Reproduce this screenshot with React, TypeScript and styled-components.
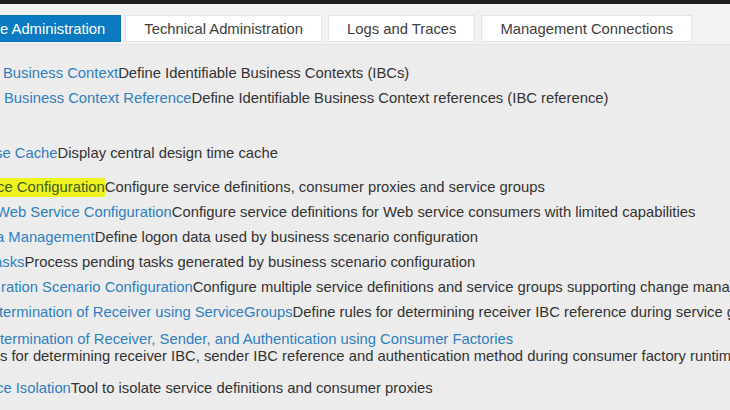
import React from "react";
import styled, { createGlobalStyle } from "styled-components";

const Global = createGlobalStyle`
  html, body { margin: 0; padding: 0; }
  body {
    background: #ededed;
    font-family: "Liberation Sans", Arial, sans-serif;
    width: 730px;
    height: 410px;
    overflow: hidden;
  }
`;

const Page = styled.div`
  width: 730px;
  height: 410px;
  overflow: hidden;
  display: flex;
  flex-direction: column;
  background: #ececec;
`;

const TopBar = styled.div`
  height: 4px;
  background: #1f1f1f;
  flex: none;
`;

const TabStrip = styled.div`
  display: flex;
  align-items: flex-end;
  gap: 6px;
  padding: 11px 0 2px 0;
  background: #f2f2f2;
  border-bottom: 1px solid #e3e3e3;
  flex: none;
`;

const Tab = styled.div<{ $active?: boolean }>`
  height: 27px;
  box-sizing: border-box;
  display: flex;
  align-items: center;
  padding: ${(p) => (p.$active ? "0 15px 0 0" : "0 18px")};
  margin-right: ${(p) => (p.$active ? "-2px" : "0")};
  font-size: 14.8px;
  white-space: nowrap;
  color: ${(p) => (p.$active ? "#ffffff" : "#3d3d3d")};
  background: ${(p) => (p.$active ? "#0a7bc2" : "#ffffff")};
  border: 1px solid ${(p) => (p.$active ? "#0a72b4" : "#e4e4e4")};
  border-left-width: ${(p) => (p.$active ? "0" : "1px")};
`;

const Content = styled.div`
  display: flex;
  flex-direction: column;
  padding-top: 16px;
  font-size: 14.8px;
`;

const Row = styled.div<{ $gap?: number; $x?: number }>`
  line-height: 17px;
  padding: 4px 0;
  margin-top: ${(p) => p.$gap ?? 0}px;
  margin-left: ${(p) => p.$x ?? 0}px;
  white-space: nowrap;
  color: #333333;
`;

const Link = styled.span<{ $mark?: boolean }>`
  color: ${(p) => (p.$mark ? "#3f5f1a" : "#2f7fbf")};
  background: ${(p) => (p.$mark ? "#eef21e" : "transparent")};
  padding: ${(p) => (p.$mark ? "1px 0 2px" : "0")};
`;

const Desc = styled.span`
  color: #333333;
`;

const Wrapped = styled.div`
  color: #333333;
`;

type Item = {
  link: string;
  desc: string;
  gap?: number;
  x?: number;
  mark?: boolean;
  second?: string;
};

const items: Item[] = [
  { link: "Business Context", desc: "Define Identifiable Business Contexts (IBCs)", x: 3 },
  { link: "Business Context Reference", desc: "Define Identifiable Business Context references (IBC reference)", x: 4 },
  { link: "se Cache", desc: "Display central design time cache", gap: 30, x: -5 },
  { link: "ce Configuration", desc: "Configure service definitions, consumer proxies and service groups", gap: 9, mark: true, x: -3 },
  { link: "Web Service Configuration", desc: "Configure service definitions for Web service consumers with limited capabilities", x: -4 },
  { link: "a Management", desc: "Define logon data used by business scenario configuration", x: -4 },
  { link: "asks", desc: "Process pending tasks generated by business scenario configuration", x: -6 },
  { link: "ration Scenario Configuration", desc: "Configure multiple service definitions and service groups supporting change management", x: 1 },
  { link: "termination of Receiver using ServiceGroups", desc: "Define rules for determining receiver IBC reference during service group runtime", x: -1 },
  {
    link: "termination of Receiver, Sender, and Authentication using Consumer Factories",
    desc: "",
    second: "s for determining receiver IBC, sender IBC reference and authentication method during consumer factory runtime",
    gap: 2,
    x: 0,
  },
  { link: "ce Isolation", desc: "Tool to isolate service definitions and consumer proxies", gap: 7, x: -4 },
];

export default function App() {
  return (
    <Page>
      <Global />
      <TopBar />
      <TabStrip>
        <Tab $active>e Administration</Tab>
        <Tab>Technical Administration</Tab>
        <Tab>Logs and Traces</Tab>
        <Tab>Management Connections</Tab>
      </TabStrip>
      <Content>
        {items.map((it, i) => (
          <Row key={i} $gap={it.gap} $x={it.x}>
            <Link $mark={it.mark}>{it.link}</Link>
            {it.desc && <Desc>{it.desc}</Desc>}
            {it.second && <Wrapped>{it.second}</Wrapped>}
          </Row>
        ))}
      </Content>
    </Page>
  );
}
